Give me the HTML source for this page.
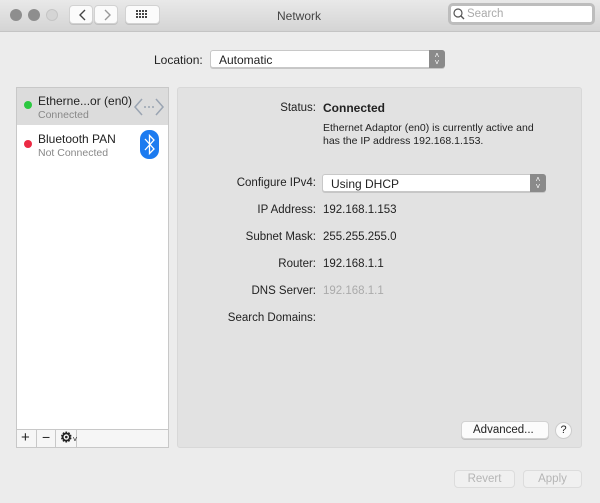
<!DOCTYPE html>
<html><head><style>
*{margin:0;padding:0;box-sizing:border-box}
body{width:600px;height:503px;background:#ececec;font-family:"Liberation Sans",sans-serif;font-size:11.5px;color:#222;position:relative;overflow:hidden}
.a{position:absolute;white-space:nowrap}
.tb{position:absolute;left:0;top:0;width:600px;height:32px;background:linear-gradient(#e9e9e9,#d4d4d4);border-bottom:1px solid #c4c4c4}
.dot{position:absolute;top:9px;width:12px;height:12px;border-radius:50%;background:#8e8e8e}
.btn{position:absolute;background:#fbfbfb;border:1px solid #d2d2d2;border-radius:4px;box-shadow:0 1px 0 #c0c0c0}
.lbl{position:absolute;right:284px;white-space:nowrap;text-align:right}
.val{position:absolute;left:323px;white-space:nowrap}
.sel{position:absolute;background:#fff;border:1px solid #c8c8c8;border-radius:3px;box-shadow:0 1px 0 #c6c6c6}
.ar{position:absolute;right:-1px;top:-1px;bottom:-1px;width:16px;background:#8a8a8a;border-radius:0 3px 3px 0;color:#fff;font-size:8px;line-height:7px;text-align:center;padding-top:2px}
</style></head><body>
<div class="tb">
<div class="dot" style="left:10px"></div>
<div class="dot" style="left:28px"></div>
<div class="dot" style="left:46px;background:#d5d5d5;border:1px solid #c5c5c5"></div>
<div class="btn" style="left:69px;top:5px;width:24px;height:19px"></div>
<div class="btn" style="left:94px;top:5px;width:24px;height:19px"></div>
<svg class="a" style="left:75px;top:8px" width="40" height="14"><path d="M10 2L5 7L10 12" stroke="#444" stroke-width="1.4" fill="none"/><path d="M30 2L35 7L30 12" stroke="#999" stroke-width="1.4" fill="none"/></svg>
<div class="btn" style="left:125px;top:5px;width:35px;height:19px"></div>
<svg class="a" style="left:136px;top:10px" width="14" height="10"><g fill="#444"><rect x="0" y="0" width="2" height="2"/><rect x="3" y="0" width="2" height="2"/><rect x="6" y="0" width="2" height="2"/><rect x="9" y="0" width="2" height="2"/><rect x="0" y="3" width="2" height="2"/><rect x="3" y="3" width="2" height="2"/><rect x="6" y="3" width="2" height="2"/><rect x="9" y="3" width="2" height="2"/><rect x="0" y="6" width="2" height="2"/><rect x="3" y="6" width="2" height="2"/><rect x="6" y="6" width="2" height="2"/><rect x="9" y="6" width="2" height="2"/></g></svg>
<div class="a" style="left:277px;top:9px;font-size:12px;color:#444">Network</div>
<div class="a" style="left:448px;top:3px;width:147px;height:22px;border:3px solid #bdbdbd;border-radius:5px;background:#fff"></div>
<svg class="a" style="left:453px;top:8px" width="12" height="12"><circle cx="5" cy="5" r="4" stroke="#555" stroke-width="1.2" fill="none"/><path d="M8 8L11 11" stroke="#555" stroke-width="1.4"/></svg>
<div class="a" style="left:467px;top:8px;color:#aaa;font-size:11.5px">Search</div>
</div>
<div class="a" style="left:154px;top:53px;font-size:12px">Location:</div>
<div class="sel" style="left:210px;top:50px;width:235px;height:18px"><span class="a" style="left:8px;top:2px;font-size:12px">Automatic</span><div class="ar">˄<br>˅</div></div>
<div class="a" style="left:16px;top:87px;width:153px;height:361px;background:#fff;border:1px solid #c8c8c8"></div>
<div class="a" style="left:17px;top:88px;width:151px;height:37px;background:#dcdcdc"></div>
<div class="a" style="left:24px;top:101px;width:8px;height:8px;border-radius:50%;background:#2bc840"></div>
<div class="a" style="left:38px;top:94px;font-size:12px">Etherne...or (en0)</div>
<div class="a" style="left:38px;top:109px;color:#888;font-size:10.5px">Connected</div>
<svg class="a" style="left:134px;top:97px" width="30" height="20"><path d="M8 2L1 10L8 18M22 2L29 10L22 18" stroke="#9aa4b2" stroke-width="1.5" fill="none"/><circle cx="11" cy="10" r="1" fill="#9aa4b2"/><circle cx="15" cy="10" r="1" fill="#9aa4b2"/><circle cx="19" cy="10" r="1" fill="#9aa4b2"/></svg>
<div class="a" style="left:24px;top:140px;width:8px;height:8px;border-radius:50%;background:#ec2a44"></div>
<div class="a" style="left:38px;top:132px;font-size:12px">Bluetooth PAN</div>
<div class="a" style="left:38px;top:147px;color:#888;font-size:10.5px">Not Connected</div>
<svg class="a" style="left:140px;top:130px" width="19" height="29"><rect x="0" y="0" width="19" height="29" rx="9" fill="#1c7bf0"/><path d="M5 9L14 19L9.5 23.5V5.5L14 10L5 20" stroke="#fff" stroke-width="1.3" fill="none"/></svg>
<div class="a" style="left:16px;top:429px;width:153px;height:19px;border:1px solid #c8c8c8;background:#f6f6f6"></div>
<div class="a" style="left:36px;top:430px;width:1px;height:17px;background:#c8c8c8"></div>
<div class="a" style="left:55px;top:430px;width:1px;height:17px;background:#c8c8c8"></div>
<div class="a" style="left:76px;top:430px;width:1px;height:17px;background:#c8c8c8"></div>
<div class="a" style="left:21px;top:429px;font-size:15px">+</div>
<div class="a" style="left:42px;top:429px;font-size:14px">−</div>
<div class="a" style="left:60px;top:429px;font-size:14px;font-weight:bold">⚙<span style="font-size:8px;font-weight:normal">˅</span></div>
<div class="a" style="left:177px;top:87px;width:405px;height:361px;background:#e2e2e2;border:1px solid #d8d8d8;border-radius:3px"></div>
<div class="lbl" style="top:102px">Status:</div>
<div class="val" style="top:101px;font-weight:bold;font-size:12px">Connected</div>
<div class="val" style="top:122px;font-size:10.5px;line-height:13px">Ethernet Adaptor (en0) is currently active and<br>has the IP address 192.168.1.153.</div>
<div class="lbl" style="top:177px">Configure IPv4:</div>
<div class="sel" style="left:322px;top:174px;width:224px;height:18px"><span class="a" style="left:8px;top:2px;font-size:12px">Using DHCP</span><div class="ar">˄<br>˅</div></div>
<div class="lbl" style="top:204px">IP Address:</div><div class="val" style="top:204px">192.168.1.153</div>
<div class="lbl" style="top:231px">Subnet Mask:</div><div class="val" style="top:231px">255.255.255.0</div>
<div class="lbl" style="top:258px">Router:</div><div class="val" style="top:258px">192.168.1.1</div>
<div class="lbl" style="top:285px">DNS Server:</div><div class="val" style="top:285px;color:#aaa">192.168.1.1</div>
<div class="lbl" style="top:312px">Search Domains:</div>
<div class="btn" style="left:461px;top:421px;width:88px;height:18px"><span class="a" style="left:11px;top:2px;font-size:11.5px">Advanced...</span></div>
<div class="a" style="left:555px;top:422px;width:17px;height:17px;border-radius:50%;background:#fbfbfb;border:1px solid #ccc;text-align:center;line-height:15px;font-size:11px">?</div>
<div class="a" style="left:454px;top:470px;width:61px;height:18px;border:1px solid #dcdcdc;border-radius:4px;background:#f0f0f0;color:#b5b5b5;text-align:center;line-height:16px;font-size:11.5px">Revert</div>
<div class="a" style="left:523px;top:470px;width:59px;height:18px;border:1px solid #dcdcdc;border-radius:4px;background:#f0f0f0;color:#b5b5b5;text-align:center;line-height:16px;font-size:11.5px">Apply</div>
</body></html>
